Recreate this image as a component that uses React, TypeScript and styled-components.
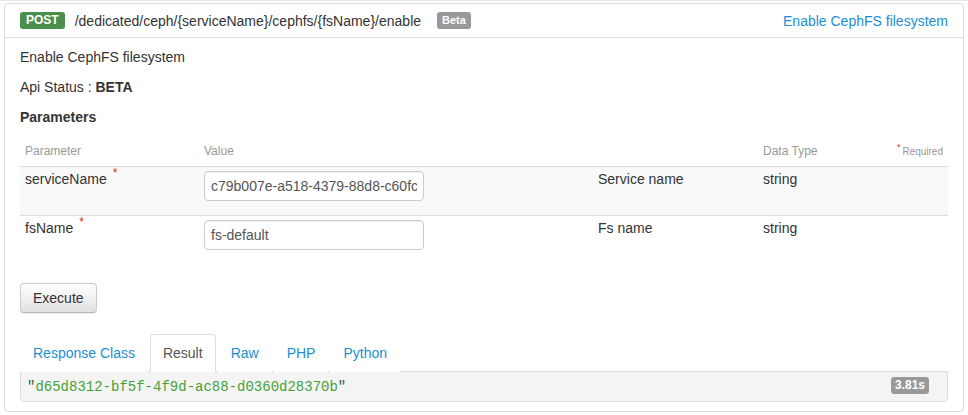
import React from "react";
import styled, { createGlobalStyle } from "styled-components";

const GlobalStyle = createGlobalStyle`
  html, body { margin: 0; padding: 0; background: #fff; }
  body {
    font-family: "Liberation Sans", Arial, Helvetica, sans-serif;
    font-size: 14px;
    line-height: 20px;
    color: #333;
  }
  * { box-sizing: border-box; }
`;

const Page = styled.div`
  padding: 3px 4px 0 4px;
  border-top: 1px solid #e6e6e6;
`;

const Panel = styled.div`
  border: 1px solid #ddd;
  border-radius: 4px;
  width: 960px;
  margin-top: -1px;
  background: #fff;
`;

const Header = styled.div`
  display: flex;
  align-items: center;
  height: 34px;
  padding: 0 15px;
  border-bottom: 1px solid #ddd;
`;

const Method = styled.span`
  display: inline-block;
  background: #4a8f4b;
  color: #fff;
  font-weight: bold;
  font-size: 12px;
  line-height: 17px;
  padding: 0 6px;
  border-radius: 3px;
  margin-right: 10px;
`;

const Path = styled.span`
  font-size: 14px;
  color: #333;
`;

const Tag = styled.span`
  display: inline-block;
  background: #999;
  color: #fff;
  font-weight: bold;
  font-size: 11px;
  line-height: 17px;
  padding: 0 5px;
  border-radius: 3px;
  margin-left: 16px;
`;

const Summary = styled.a`
  margin-left: auto;
  color: #1b8fd2;
  text-decoration: none;
  font-size: 14px;
`;

const Body = styled.div`
  padding: 9px 15px 9px;
`;

const Para = styled.p`
  margin: 0 0 10px;
`;

const Heading = styled.h4`
  margin: 0 0 10px;
  font-size: 14px;
  line-height: 20px;
  font-weight: bold;
`;

const Table = styled.div`
  display: grid;
  grid-template-columns: 179px 394px 165px 1fr 110px;
`;

const HeadCell = styled.div<{ $right?: boolean }>`
  font-size: 12px;
  line-height: 17px;
  color: #999;
  padding: 6px 5px;
  border-bottom: 1px solid #ddd;
  text-align: ${(p) => (p.$right ? "right" : "left")};
`;

const Cell = styled.div<{ $striped?: boolean; $last?: boolean }>`
  padding: 4px 5px 14px;
  background: ${(p) => (p.$striped ? "#f9f9f9" : "#fff")};
  border-bottom: ${(p) => (p.$last ? "none" : "1px solid #ddd")};
`;

const Star = styled.sup`
  color: #e0282e;
  font-size: 12px;
  margin-left: 6px;
  line-height: 0;
  position: relative;
  top: -1px;
`;

const SmallStar = styled.sup`
  color: #e0282e;
  font-size: 9px;
  line-height: 0;
  margin-right: 2px;
`;

const Required = styled.span`
  font-size: 10px;
`;

const NameText = styled.span`
  display: inline-block;
  position: relative;
  top: -2px;
`;

const Input = styled.input`
  display: block;
  width: 220px;
  height: 30px;
  padding: 4px 6px;
  font-family: "Liberation Sans", Arial, sans-serif;
  font-size: 14px;
  color: #555;
  border: 1px solid #ccc;
  border-radius: 4px;
  background: #fff;
  box-shadow: inset 0 1px 1px rgba(0, 0, 0, 0.06);
  outline: none;
`;

const Execute = styled.button`
  margin-top: 19px;
  display: inline-block;
  font-family: "Liberation Sans", Arial, sans-serif;
  font-size: 14px;
  line-height: 20px;
  color: #333;
  padding: 4px 12px;
  border: 1px solid #ccc;
  border-bottom-color: #b8b8b8;
  border-radius: 4px;
  background: linear-gradient(to bottom, #fff 0%, #e0e0e0 100%);
  box-shadow: inset 0 1px 0 rgba(255, 255, 255, 0.15), 0 1px 1px rgba(0, 0, 0, 0.075);
  cursor: pointer;
`;

const Tabs = styled.ul`
  list-style: none;
  margin: 21px 0 0;
  padding: 0;
  display: flex;
  gap: 2px;
`;

const Tab = styled.li<{ $active?: boolean }>`
  padding: 8px 12px;
  border: 1px solid ${(p) => (p.$active ? "#ddd" : "transparent")};
  border-bottom: 1px solid ${(p) => (p.$active ? "#fff" : "transparent")};
  border-radius: 4px 4px 0 0;
  margin-bottom: -1px;
  color: ${(p) => (p.$active ? "#555" : "#1b8fd2")};
  background: #fff;
  position: relative;
  z-index: 1;
`;

const ResultBox = styled.div`
  position: relative;
  background: #f4f4f4;
  border: 1px solid #ddd;
  border-radius: 0 0 4px 4px;
  padding: 5px 6px 4px;
  font-family: "Liberation Mono", "Courier New", monospace;
  font-size: 14px;
  line-height: 20px;
  color: #46a13a;
`;

const Quote = styled.span`
  color: #3b5e35;
`;

const Timing = styled.span`
  position: absolute;
  right: 18px;
  top: 5px;
  background: #999;
  color: #fff;
  font-family: "Liberation Sans", Arial, sans-serif;
  font-size: 12px;
  font-weight: bold;
  line-height: 17px;
  padding: 0 4px;
  border-radius: 3px;
`;

const params = [
  { name: "serviceName", value: "c79b007e-a518-4379-88d8-c60fc", desc: "Service name", type: "string" },
  { name: "fsName", value: "fs-default", desc: "Fs name", type: "string" },
];

export default function App() {
  return (
    <Page>
      <GlobalStyle />
      <Panel>
        <Header>
          <Method>POST</Method>
          <Path>/dedicated/ceph/{"{serviceName}"}/cephfs/{"{fsName}"}/enable</Path>
          <Tag>Beta</Tag>
          <Summary href="#">Enable CephFS filesystem</Summary>
        </Header>
        <Body>
          <Para>Enable CephFS filesystem</Para>
          <Para>
            Api Status : <b>BETA</b>
          </Para>
          <Heading>Parameters</Heading>
          <Table>
            <HeadCell>Parameter</HeadCell>
            <HeadCell>Value</HeadCell>
            <HeadCell />
            <HeadCell>Data Type</HeadCell>
            <HeadCell $right>
              <SmallStar>*</SmallStar>
              <Required>Required</Required>
            </HeadCell>
            {params.map((p, i) => {
              const striped = i % 2 === 0;
              const last = i === params.length - 1;
              return (
                <React.Fragment key={p.name}>
                  <Cell $striped={striped} $last={last}>
                    <NameText>
                      {p.name}
                      <Star>*</Star>
                    </NameText>
                  </Cell>
                  <Cell $striped={striped} $last={last}>
                    <Input defaultValue={p.value} />
                  </Cell>
                  <Cell $striped={striped} $last={last}>
                    <NameText>{p.desc}</NameText>
                  </Cell>
                  <Cell $striped={striped} $last={last}>
                    <NameText>{p.type}</NameText>
                  </Cell>
                  <Cell $striped={striped} $last={last} />
                </React.Fragment>
              );
            })}
          </Table>
          <Execute>Execute</Execute>
          <Tabs>
            <Tab>Response Class</Tab>
            <Tab $active>Result</Tab>
            <Tab>Raw</Tab>
            <Tab>PHP</Tab>
            <Tab>Python</Tab>
          </Tabs>
          <ResultBox>
            <Quote>"</Quote>d65d8312-bf5f-4f9d-ac88-d0360d28370b<Quote>"</Quote>
            <Timing>3.81s</Timing>
          </ResultBox>
        </Body>
      </Panel>
    </Page>
  );
}
